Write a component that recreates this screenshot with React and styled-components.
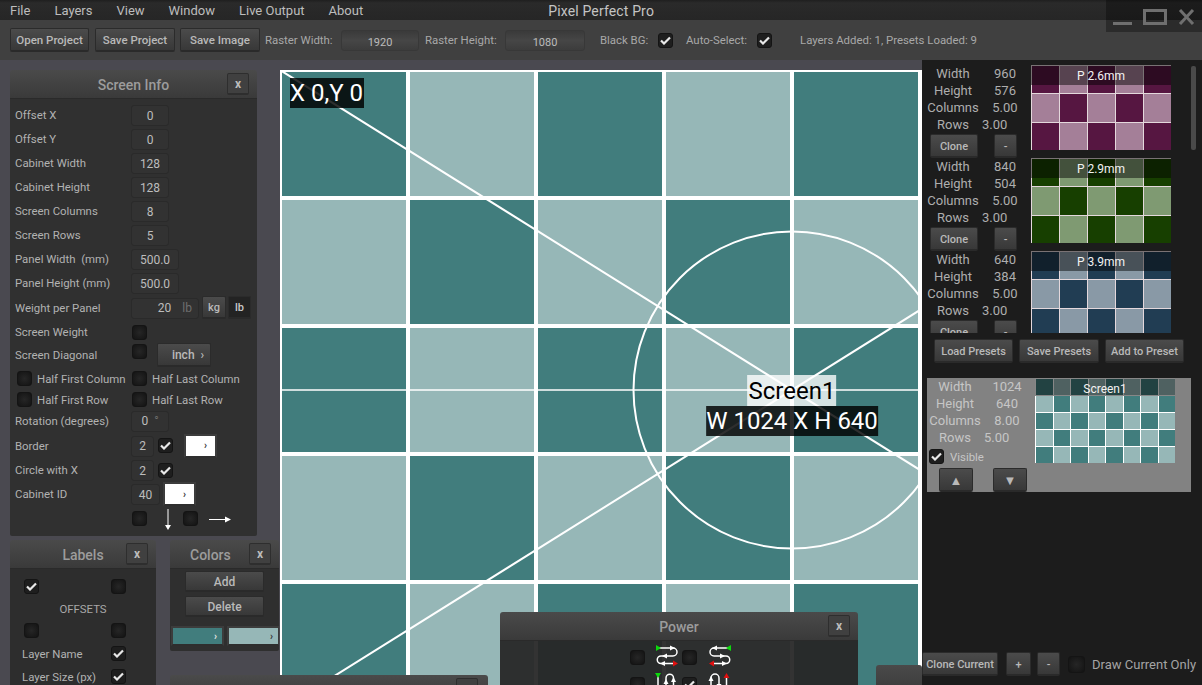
import React from 'react';
import styled, { createGlobalStyle } from 'styled-components';

const GlobalStyle = createGlobalStyle`
  html, body { margin: 0; padding: 0; background: #4a4950; overflow: hidden; }
  * { box-sizing: border-box; }
`;

const App_ = styled.div`
  position: relative;
  width: 1202px;
  height: 685px;
  overflow: hidden;
  display: flex;
  flex-direction: column;
  font-family: Roboto, "Liberation Sans", sans-serif;
  font-size: 11.4px;
  color: #b4b4b4;
  background: #4a4950;
`;

const MenuBar = styled.div`
  height: 20px;
  flex: none;
  display: flex;
  align-items: center;
  padding: 1px 0 0 10px;
  gap: 24px;
  font-size: 13px;
  color: #bdbdbd;
  background: linear-gradient(#1f1f1f 0, #2a2a2a 3px, #262626);
`;

const AppTitle = styled.span`
  margin-left: 161px;
  font-size: 14px;
  letter-spacing: 0.15px;
  color: #c4c4c4;
`;

const WindowControls = styled.div`
  position: absolute;
  top: 0;
  right: 0;
  width: 96px;
  height: 32px;
  background: rgba(0, 0, 0, 0.32);
  svg { display: block; }
`;

const Toolbar = styled.div`
  height: 40px;
  flex: none;
  display: flex;
  align-items: center;
  padding-left: 10px;
  background: #404040;
`;

const Button = styled.div`
  width: ${p => p.$w}px;
  height: ${p => p.$h || 24}px;
  flex: none;
  margin-left: ${p => p.$ml || 0}px;
  display: flex;
  align-items: center;
  justify-content: center;
  padding: 1px 0 0 ${p => p.$pl || 0}px;
  font-size: ${p => p.$fs || 11}px;
  font-weight: 500;
  color: ${p => p.$dark ? '#c8c8c8' : '#b9b9b9'};
  white-space: nowrap;
  border-radius: 2px;
  border: 1px solid #2b2b2b;
  border-bottom: 2px solid #2a2a2a;
  background: ${p => p.$dark ? '#232323' : 'linear-gradient(#4b4b4b, #383838)'};
`;

const ToolLabel = styled.span`
  margin-left: ${p => p.$ml}px;
  width: ${p => p.$w}px;
  flex: none;
  white-space: nowrap;
  color: #a8a8a8;
`;

const ToolField = styled.div`
  margin-left: ${p => p.$ml}px;
  width: ${p => p.$w}px;
  height: 21px;
  flex: none;
  display: flex;
  align-items: center;
  justify-content: center;
  padding-top: 4px;
  font-size: 11px;
  color: #bcbcbc;
  border-radius: 3px;
  border: 1px solid #383838;
  background: linear-gradient(#3a3a3a, #464646 50%, #3c3c3c);
`;

const Workspace = styled.div`
  position: relative;
  flex: 1;
  display: flex;
  padding-left: 280px;
  min-height: 0;
`;

const Canvas = styled.div`
  position: relative;
  width: 642px;
  margin-top: 10px;
  flex: none;
  overflow: hidden;
  svg { display: block; }
`;

const DarkTag = styled.div`
  height: 30px;
  display: flex;
  align-items: center;
  font-size: 24px;
  color: #fff;
  white-space: nowrap;
  background: rgba(0, 0, 0, 0.82);
`;

const OriginTag = styled(DarkTag)`
  position: absolute;
  left: 10px;
  top: 8px;
  padding: 0 1px 0 0;
`;

const ScreenTags = styled.div`
  position: absolute;
  left: 512px;
  top: 305px;
  transform: translateX(-50%);
  display: flex;
  flex-direction: column;
  align-items: center;
`;

const LightTag = styled.div`
  height: 31px;
  padding: 0 1px;
  display: flex;
  align-items: center;
  font-size: 24px;
  color: #000;
  white-space: nowrap;
  background: rgba(255, 255, 255, 0.78);
`;

const Sidebar = styled.div`
  width: 280px;
  flex: none;
  display: flex;
  flex-direction: column;
  background: #1c1c1c;
  position: relative;
`;

const PresetList = styled.div`
  position: relative;
  height: 273px;
  flex: none;
  padding-top: 5px;
  overflow: hidden;
`;

const ScrollThumb = styled.div`
  position: absolute;
  left: 269px;
  top: 6px;
  width: 5px;
  height: 84px;
  border-radius: 2px;
  background: #4a4a4a;
`;

const Preset = styled.div`
  height: 93px;
  display: flex;
  padding-left: 3px;
`;

const InfoColumn = styled.div`
  width: ${p => p.$w}px;
  flex: none;
  color: ${p => p.$light ? '#c6c6c6' : '#aeaeae'};
  font-size: 13px;
`;

const InfoRow = styled.div`
  height: 17px;
  display: grid;
  grid-template-columns: 56px 48px;
  align-items: center;
  text-align: center;
  line-height: 17px;
`;

const InfoValue = styled.span`
  text-align: ${p => p.$near ? 'left' : 'center'};
  padding-left: ${p => p.$near ? 1 : 0}px;
`;

const CloneRow = styled.div`
  display: flex;
  margin-top: 1px;
`;

const ThumbGrid = styled.div`
  position: relative;
  width: 140px;
  height: 85px;
  flex: none;
  display: grid;
  grid-template-columns: repeat(${p => p.$cols}, 1fr);
  grid-template-rows: repeat(${p => p.$rows}, 1fr);
  gap: 1px;
  padding: 1px 0 0 1px;
  background: ${p => p.$line};
`;

const ThumbCell = styled.div`
  background: ${p => p.$color};
`;

const ThumbLabel = styled.div`
  position: absolute;
  left: 0;
  top: 0;
  right: 0;
  height: ${p => p.$h}px;
  display: flex;
  align-items: center;
  justify-content: center;
  padding-top: ${p => p.$pt}px;
  font-size: 12px;
  color: #f2f2f2;
  background: rgba(0, 0, 0, 0.47);
`;

const PresetActions = styled.div`
  display: flex;
  gap: 6px;
  padding: 6px 0 0 12px;
  flex: none;
`;

const LayerCard = styled.div`
  margin: 15px 0 0 5px;
  width: 264px;
  height: 114px;
  flex: none;
  display: flex;
  background: #828282;
`;

const CardThumb = styled.div`
  margin-left: 4px;
`;

const VisibleRow = styled.div`
  display: flex;
  align-items: center;
  gap: 6px;
  margin: 3px 0 0 2px;
  font-size: 11.4px;
  color: #c6c6c6;
`;

const MoveRow = styled.div`
  display: flex;
  gap: 20px;
  margin: 4px 0 0 12px;
`;

const BottomRow = styled.div`
  display: flex;
  align-items: center;
  margin-top: auto;
  margin-bottom: 9px;
  flex: none;
`;

const DrawLabel = styled.span`
  margin-left: 7px;
  font-size: 13px;
  color: #a4a4a4;
  white-space: nowrap;
`;

const Window = styled.div`
  position: absolute;
  left: ${p => p.$x}px;
  top: ${p => p.$y}px;
  width: ${p => p.$w}px;
  height: ${p => p.$h}px;
  display: flex;
  flex-direction: column;
  border-radius: 3px 3px 0 0;
  overflow: hidden;
`;

const TitleBar = styled.div`
  height: 29px;
  flex: none;
  display: grid;
  grid-template-columns: ${p => p.$cols || '1fr auto 1fr'};
  align-items: center;
  border-bottom: 1px solid #2a2a2a;
  background: linear-gradient(#4a4a4a, #3a3a3a);
`;

const TitleText = styled.span`
  grid-column: 2;
  padding-top: 2px;
  font-size: 14px;
  font-weight: 500;
  color: #9c9c9c;
`;

const CloseButton = styled.div`
  grid-column: 3;
  justify-self: end;
  width: 22px;
  height: 22px;
  margin-right: ${p => p.$mr || 8}px;
  display: flex;
  align-items: center;
  justify-content: center;
  font-size: 12px;
  font-weight: 700;
  color: #bcbcbc;
  border: 1px solid #2e2e2e;
  border-bottom-width: 2px;
  border-radius: 2px;
  background: #404040;
`;

const WindowBody = styled.div`
  flex: 1;
  min-height: 0;
  padding: ${p => p.$pad || '0'};
  background: ${p => p.$bg || '#303030'};
  border-radius: 0 0 2px 2px;
`;

const FormRow = styled.div`
  height: ${p => p.$h || 24}px;
  display: flex;
  align-items: center;
`;

const FormLabel = styled.span`
  width: ${p => p.$w || 116}px;
  flex: none;
  margin-left: ${p => p.$ml || 0}px;
  padding-left: ${p => p.$pl || 0}px;
  white-space: pre;
  color: #b2b2b2;
`;

const Field = styled.div`
  width: ${p => p.$w || 38}px;
  height: 21px;
  flex: none;
  margin-top: 1px;
  display: flex;
  align-items: center;
  justify-content: ${p => p.$end ? 'flex-end' : 'center'};
  gap: ${p => p.$end ? 11 : 6}px;
  padding-right: ${p => p.$end ? 6 : 0}px;
  font-size: 12px;
  color: #bdbdbd;
  border-radius: 3px;
  border: 1px solid #2a2a2a;
  background: #323232;
`;

const Unit = styled.span`
  color: #6e6e6e;
`;

const Box = styled.div`
  width: ${p => p.$s || 15}px;
  height: ${p => p.$s || 15}px;
  flex: none;
  margin-left: ${p => p.$ml || 0}px;
  margin-top: ${p => p.$mt || 0}px;
  display: flex;
  align-items: center;
  justify-content: center;
  border-radius: 3px;
  border: 1px solid #141414;
  background: ${p => p.$on ? '#1e1e1e' : 'radial-gradient(#262626, #131313)'};
  svg { display: block; }
`;

const Swatch = styled.div`
  width: ${p => p.$w}px;
  height: ${p => p.$h || 24}px;
  flex: none;
  margin-left: ${p => p.$ml || 0}px;
  display: flex;
  align-items: center;
  justify-content: flex-end;
  padding-right: ${p => p.$pr || 8}px;
  font-size: 10px;
  font-weight: 700;
  color: ${p => p.$chev};
  border: 2px solid #3c3c3c;
  border-bottom-color: #2e2e2e;
  background: ${p => p.$color};
`;

const LabelsBody = styled(WindowBody)`
  padding: 10px 0 0 14px;
`;

const OffsetsText = styled.div`
  height: 29px;
  width: 118px;
  display: flex;
  align-items: center;
  justify-content: center;
  color: #a8a8a8;
`;

const ColorsStack = styled.div`
  display: flex;
  flex-direction: column;
  align-items: center;
  gap: 4px;
  padding-top: 2px;
`;

const SwatchRow = styled.div`
  display: flex;
  gap: 3px;
  padding: 9px 0 0 1px;
`;

const PowerGrid = styled.div`
  display: grid;
  grid-template-columns: 25px 27px 26px 24px;
  grid-auto-rows: 24px;
  row-gap: 3px;
  align-items: center;
  padding: 4px 0 0 130px;
  svg { display: block; overflow: visible; }
`;

const TEAL = '#417d7d';
const TEAL_LIGHT = '#96b7b7';

const Tick = () => (
  <svg width="11" height="9" viewBox="0 0 11 9">
    <path d="M1 4.5 L4 7.5 L10 1.5" fill="none" stroke="#e8e8e8" strokeWidth="2.2" />
  </svg>
);

const Check = ({ on, ml, mt, s }) => <Box $on={on} $ml={ml} $mt={mt} $s={s}>{on && <Tick />}</Box>;

const Thumb = ({ cols, rows, dark, light, line, label, labelH, labelPt }) => {
  const cells = [];
  for (let r = 0; r < rows; r++) {
    for (let c = 0; c < cols; c++) {
      cells.push(<ThumbCell key={r + '-' + c} $color={(r + c) % 2 ? light : dark} />);
    }
  }
  return (
    <ThumbGrid $cols={cols} $rows={rows} $line={line}>
      {cells}
      <ThumbLabel $h={labelH} $pt={labelPt}>{label}</ThumbLabel>
    </ThumbGrid>
  );
};

const Info = ({ width, height, columns, rows }) => (
  <>
    <InfoRow><span>Width</span><InfoValue>{width}</InfoValue></InfoRow>
    <InfoRow><span>Height</span><InfoValue>{height}</InfoValue></InfoRow>
    <InfoRow><span>Columns</span><InfoValue>{columns}</InfoValue></InfoRow>
    <InfoRow><span>Rows</span><InfoValue $near>{rows}</InfoValue></InfoRow>
  </>
);

const presets = [
  { width: 960, height: 576, label: 'P 2.6mm', dark: '#561641', light: '#a47f98' },
  { width: 840, height: 504, label: 'P 2.9mm', dark: '#173f00', light: '#7f9a72' },
  { width: 640, height: 384, label: 'P 3.9mm', dark: '#213d53', light: '#8999a6' },
];

// drawing of the raster: 1024x640 screen with 128px cabinets
const ScreenDrawing = () => {
  const cells = [];
  for (let r = 0; r < 5; r++) {
    for (let c = 0; c < 8; c++) {
      cells.push(<rect key={r + '-' + c} x={c * 128} y={r * 128} width="128" height="128" fill={(r + c) % 2 ? TEAL_LIGHT : TEAL} />);
    }
  }
  const lines = [];
  for (let c = 0; c <= 8; c++) lines.push(<path key={'v' + c} d={`M${c * 128} 0 V640`} stroke="#fff" strokeWidth="4" />);
  for (let r = 0; r <= 5; r++) lines.push(<path key={'h' + r} d={`M0 ${r * 128} H1024`} stroke="#fff" strokeWidth="4" />);
  return (
    <svg width="642" height="615" viewBox="0 0 642 615">
      {cells}
      <path d="M0 320 H1024" stroke="#fff" strokeWidth="1.5" />
      <path d="M0 0 L1024 640 M1024 0 L0 640" stroke="#fff" strokeWidth="2" />
      {lines}
      <circle cx="512" cy="320" r="158.5" fill="none" stroke="#fff" strokeWidth="2" />
    </svg>
  );
};

const arrowHeads = (
  <>
    <path d="M20 0.5 L15 3 L20 5.5 Z" fill="#fff" transform="rotate(180 17.5 3)" />
    <path d="M7 8.5 L12 11 L7 13.5 Z" fill="#fff" transform="rotate(180 9.5 11)" />
    <path d="M5 16 L10 18.5 L5 21 Z" fill="#fff" transform="rotate(180 7.5 18.5)" />
  </>
);

// serpentine data path icon; start and end triangles carry the green and red
const SnakeIcon = ({ flip, vertical }) => {
  let transform;
  if (vertical) transform = flip ? 'translate(0 24) scale(1 -1) matrix(0 1 1 0 0 0)' : 'matrix(0 1 1 0 0 0)';
  else if (flip) transform = 'translate(24 0) scale(-1 1)';
  return (
    <svg width="24" height="24" viewBox="0 0 24 24">
      <g transform={transform}>
        <path d="M3 3 H18 A4 4 0 0 1 18 11 H6 A3.75 3.75 0 0 0 6 18.5 H19" fill="none" stroke="#fff" strokeWidth="1.5" />
        {arrowHeads}
        <path d="M1 0 L6 3 L1 6 Z" fill="#0cd80c" />
        <path d="M18 15.5 L23 18.5 L18 21.5 Z" fill="#e01010" />
      </g>
    </svg>
  );
};

const App = () => {
  return (
    <App_>
      <GlobalStyle />
      <MenuBar>
        <span>File</span>
        <span>Layers</span>
        <span>View</span>
        <span>Window</span>
        <span>Live Output</span>
        <span>About</span>
        <AppTitle>Pixel Perfect Pro</AppTitle>
      </MenuBar>
      <WindowControls>
        <svg width="96" height="32" viewBox="0 0 96 32">
          <path d="M7 23.5 H26" stroke="#6f6f6f" strokeWidth="3" />
          <rect x="38.5" y="10.5" width="21" height="13" fill="none" stroke="#6f6f6f" strokeWidth="3" />
          <path d="M74 10 L87 24 M87 10 L74 24" stroke="#6f6f6f" strokeWidth="3" />
        </svg>
      </WindowControls>
      <Toolbar>
        <Button $w={79} $fs={11.5}>Open Project</Button>
        <Button $w={80} $ml={6} $fs={11.5}>Save Project</Button>
        <Button $w={80} $ml={5} $fs={11.5}>Save Image</Button>
        <ToolLabel $ml={5} $w={68}>Raster Width:</ToolLabel>
        <ToolField $ml={8} $w={78}>1920</ToolField>
        <ToolLabel $ml={6} $w={72}>Raster Height:</ToolLabel>
        <ToolField $ml={8} $w={80}>1080</ToolField>
        <ToolLabel $ml={15} $w={48}>Black BG:</ToolLabel>
        <Check on ml={10} />
        <ToolLabel $ml={13} $w={61}>Auto-Select:</ToolLabel>
        <Check on ml={10} />
        <ToolLabel $ml={28} $w={180}>Layers Added: 1, Presets Loaded: 9</ToolLabel>
      </Toolbar>
      <Workspace>
        <Canvas>
          <ScreenDrawing />
          <OriginTag>X 0,Y 0</OriginTag>
          <ScreenTags>
            <LightTag>Screen1</LightTag>
            <DarkTag>W 1024 X H 640</DarkTag>
          </ScreenTags>
        </Canvas>
        <Sidebar>
          <PresetList>
            {presets.map(p => (
              <Preset key={p.label}>
                <InfoColumn $w={106}>
                  <Info width={p.width} height={p.height} columns="5.00" rows="3.00" />
                  <CloneRow>
                    <Button $w={48} $ml={5}>Clone</Button>
                    <Button $w={23} $ml={16}>-</Button>
                  </CloneRow>
                </InfoColumn>
                <Thumb cols={5} rows={3} dark={p.dark} light={p.light} line="#e4d8dc" label={p.label} labelH={20} labelPt={1} />
              </Preset>
            ))}
            <ScrollThumb />
          </PresetList>
          <PresetActions>
            <Button $w={79}>Load Presets</Button>
            <Button $w={80}>Save Presets</Button>
            <Button $w={79}>Add to Preset</Button>
          </PresetActions>
          <LayerCard>
            <InfoColumn $w={104} $light>
              <Info width={1024} height={640} columns="8.00" rows="5.00" />
              <VisibleRow><Check on />Visible</VisibleRow>
              <MoveRow>
                <Button $w={34} $h={24} $fs={13}>▲</Button>
                <Button $w={34} $h={24} $fs={13}>▼</Button>
              </MoveRow>
            </InfoColumn>
            <CardThumb>
              <Thumb cols={8} rows={5} dark={TEAL} light={TEAL_LIGHT} line="#fff" label="Screen1" labelH={18} labelPt={3} />
            </CardThumb>
          </LayerCard>
          <BottomRow>
            <Button $w={76}>Clone Current</Button>
            <Button $w={25} $ml={8}>+</Button>
            <Button $w={23} $ml={6}>-</Button>
            <Check ml={8} s={17} />
            <DrawLabel>Draw Current Only</DrawLabel>
          </BottomRow>
        </Sidebar>

        <Window $x={10} $y={10} $w={247} $h={466}>
          <TitleBar>
            <TitleText>Screen Info</TitleText>
            <CloseButton>x</CloseButton>
          </TitleBar>
          <WindowBody $pad="4px 0 0 5px">
            <FormRow><FormLabel>Offset X</FormLabel><Field>0</Field></FormRow>
            <FormRow><FormLabel>Offset Y</FormLabel><Field>0</Field></FormRow>
            <FormRow><FormLabel>Cabinet Width</FormLabel><Field>128</Field></FormRow>
            <FormRow><FormLabel>Cabinet Height</FormLabel><Field>128</Field></FormRow>
            <FormRow><FormLabel>Screen Columns</FormLabel><Field>8</Field></FormRow>
            <FormRow><FormLabel>Screen Rows</FormLabel><Field>5</Field></FormRow>
            <FormRow><FormLabel>Panel Width  (mm)</FormLabel><Field $w={48}>500.0</Field></FormRow>
            <FormRow><FormLabel>Panel Height (mm)</FormLabel><Field $w={48}>500.0</Field></FormRow>
            <FormRow $h={25}>
              <FormLabel>Weight per Panel</FormLabel>
              <Field $w={68} $end>20 <Unit>lb</Unit></Field>
              <Button $w={24} $h={23} $ml={3}>kg</Button>
              <Button $w={23} $h={23} $ml={2} $dark>lb</Button>
            </FormRow>
            <FormRow><FormLabel>Screen Weight</FormLabel><Check ml={1} /></FormRow>
            <FormRow $h={22}>
              <FormLabel>Screen Diagonal</FormLabel>
              <Check ml={1} mt={-7} />
              <Button $w={54} $h={24} $ml={10} $fs={12} $pl={8}>inch&nbsp;&nbsp;›</Button>
            </FormRow>
            <FormRow $h={25}>
              <Check ml={2} />
              <FormLabel $w={95} $pl={5}>Half First Column</FormLabel>
              <Check ml={5} />
              <FormLabel $w={90} $pl={5}>Half Last Column</FormLabel>
            </FormRow>
            <FormRow $h={17}>
              <Check ml={2} />
              <FormLabel $w={95} $pl={5}>Half First Row</FormLabel>
              <Check ml={5} />
              <FormLabel $w={90} $pl={5}>Half Last Row</FormLabel>
            </FormRow>
            <FormRow $h={25}><FormLabel>Rotation (degrees)</FormLabel><Field>0 <Unit>°</Unit></Field></FormRow>
            <FormRow $h={25}>
              <FormLabel>Border</FormLabel>
              <Field $w={23}>2</Field>
              <Check on ml={4} />
              <Swatch $w={33} $ml={11} $color="#fff" $chev="#333">›</Swatch>
            </FormRow>
            <FormRow><FormLabel>Circle with X</FormLabel><Field $w={23}>2</Field><Check on ml={4} /></FormRow>
            <FormRow>
              <FormLabel>Cabinet ID</FormLabel>
              <Field $w={29}>40</Field>
              <Swatch $w={33} $ml={3} $color="#fff" $chev="#333">›</Swatch>
            </FormRow>
            <FormRow>
              <FormLabel />
              <Check ml={1} />
              <svg width="36" height="24" viewBox="0 0 36 24">
                <path d="M21 3 V19" stroke="#fff" strokeWidth="1" />
                <path d="M18 19 L24 19 L21 24 Z" fill="#fff" />
              </svg>
              <Check />
              <svg width="34" height="24" viewBox="0 0 34 24">
                <path d="M11 13.5 H28" stroke="#fff" strokeWidth="1" />
                <path d="M27 10.5 L33 13.5 L27 16.5 Z" fill="#fff" />
              </svg>
            </FormRow>
          </WindowBody>
        </Window>

        <Window $x={10} $y={480} $w={146} $h={150}>
          <TitleBar>
            <TitleText>Labels</TitleText>
            <CloseButton>x</CloseButton>
          </TitleBar>
          <LabelsBody $bg="#2d2d2d">
            <FormRow $h={15}><Check on /><Check ml={72} /></FormRow>
            <OffsetsText>OFFSETS</OffsetsText>
            <FormRow $h={15}><Check /><Check ml={72} /></FormRow>
            <FormRow $h={31}><FormLabel $w={89} $ml={-2}>Layer Name</FormLabel><Check on /></FormRow>
            <FormRow $h={15}><FormLabel $w={89} $ml={-2}>Layer Size (px)</FormLabel><Check on /></FormRow>
          </LabelsBody>
        </Window>

        <Window $x={170} $y={480} $w={109} $h={111}>
          <TitleBar $cols="20px auto 1fr">
            <TitleText>Colors</TitleText>
            <CloseButton>x</CloseButton>
          </TitleBar>
          <WindowBody $bg="#2f2f2f">
            <ColorsStack>
              <Button $w={79} $h={21} $fs={12}>Add</Button>
              <Button $w={79} $h={21} $fs={12}>Delete</Button>
            </ColorsStack>
            <SwatchRow>
              <Swatch $w={53} $h={20} $pr={5} $color={TEAL} $chev="#e8e8e8">›</Swatch>
              <Swatch $w={53} $h={20} $pr={5} $color={TEAL_LIGHT} $chev="#333">›</Swatch>
            </SwatchRow>
          </WindowBody>
        </Window>

        <Window $x={170} $y={615} $w={318} $h={60}>
          <TitleBar>
            <CloseButton $mr={10}>x</CloseButton>
          </TitleBar>
        </Window>

        <Window $x={500} $y={552} $w={358} $h={133}>
          <TitleBar>
            <TitleText>Power</TitleText>
            <CloseButton>x</CloseButton>
          </TitleBar>
          <WindowBody $bg="rgba(38, 38, 38, 0.94)">
            <PowerGrid>
              <Check />
              <SnakeIcon />
              <Check />
              <SnakeIcon flip />
              <Check />
              <SnakeIcon vertical />
              <Check on />
              <SnakeIcon vertical flip />
            </PowerGrid>
          </WindowBody>
        </Window>

        <Window $x={876} $y={605} $w={46} $h={40}>
          <TitleBar />
        </Window>
      </Workspace>
    </App_>
  );
};

export default App;
